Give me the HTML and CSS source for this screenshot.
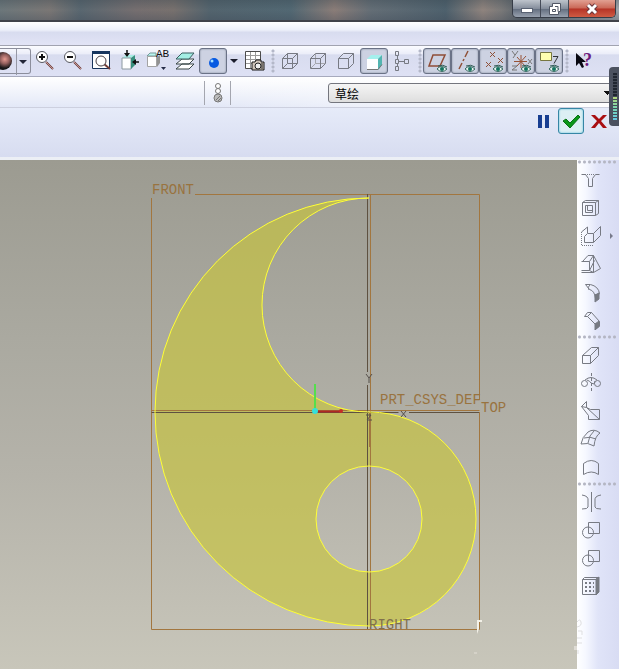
FILE: index.html
```html
<!DOCTYPE html>
<html lang="zh-CN">
<head>
  <meta charset="UTF-8" />
  <meta name="viewport" content="width=device-width, initial-scale=1.0"/>
  <title>草绘</title>
  <link rel="stylesheet" href="styles.css">
</head>
<body>
  <header class="titlebar">
    <div class="window-buttons">
      <button class="win-btn minimize" aria-label="Minimize"><svg width="14" height="12"><rect x="1.500" y="5.500" width="11" height="4" fill="#fff" stroke="#596273"/></svg></button>
      <button class="win-btn restore" aria-label="Restore"><svg width="14" height="14"><path d="M4.500 1.500h8v8h-2v3h-9v-8h3z" fill="#fff" stroke="#515765"/><path d="M4.500 7.500h3v2h-3zM7 4.500h3v5" fill="none" stroke="#515765"/></svg></button>
      <button class="win-btn close" aria-label="Close"><svg width="14" height="14"><path d="M3 3l8 8M11 3l-8 8" stroke="#68353a" stroke-width="5"/><path d="M3 3l8 8M11 3l-8 8" stroke="#fff" stroke-width="3"/></svg></button>
    </div>
  </header>

  <nav class="menubar"></nav>

  <div class="toolbar">
    <button class="split" aria-label="Appearance">
      <svg width="30" height="26"><defs><radialGradient id="ball" cx="60%" cy="40%"><stop offset="0" stop-color="#e59a92"/><stop offset=".5" stop-color="#94605e"/><stop offset="1" stop-color="#171719"/></radialGradient></defs><circle cx="3" cy="12" r="9" fill="url(#ball)"/><path d="M16.500 0v26" stroke="#9698a5"/><path d="M19 11h8l-4 4z" fill="#222638"/></svg>
    </button>
    <button class="tool" aria-label="Zoom in"><svg viewBox="0 0 24 24"><path d="M13 13l7 7" stroke="#6b3937" stroke-width="2"/><path d="M13 13l7 7" stroke="#c39690"/><circle cx="9" cy="8" r="5.500" fill="#fff" stroke="#55575f"/><path d="M6 8h6M9 5v6" stroke="#111" stroke-width="2"/></svg></button>
    <button class="tool" aria-label="Zoom out"><svg viewBox="0 0 24 24"><path d="M13 13l7 7" stroke="#6b3937" stroke-width="2"/><path d="M13 13l7 7" stroke="#c39690"/><circle cx="9" cy="8" r="5.500" fill="#fff" stroke="#55575f"/><path d="M6 8h6" stroke="#111" stroke-width="2"/></svg></button>
    <button class="tool" aria-label="Refit"><svg viewBox="0 0 24 24"><path d="M3.500 2.500h17v17h-17z" fill="#fff" stroke="#19335a"/><path d="M3 3.500h18" stroke="#17365f" stroke-width="3"/><path d="M15 15l6 5" stroke="#713d37" stroke-width="2"/><circle cx="12" cy="12" r="5" fill="#fff" stroke="#494046"/></svg></button>
    <button class="tool" aria-label="Reorient"><svg viewBox="0 0 24 24"><path d="M5 9l4-3h9l-4 3z" fill="#a8eee5"/><path d="M5 9h9v11H5z" fill="#fff" stroke="#8c99a0"/><path d="M14 9l4-3v10l-4 4z" fill="#378f7d"/><path d="M10 1v6M22 13h-6" stroke="#111" stroke-width="1.500"/><path d="M7 4h6l-3 4zM19 10v6l-4-3z" fill="#111"/></svg></button>
    <button class="tool" aria-label="Saved views"><svg viewBox="0 0 24 24"><path d="M2 7l3-3h6v3z" fill="#baf5ef" stroke="#759b9b"/><path d="M2.500 7.500h9v10h-9z" fill="#fff" stroke="#a3a3a3"/><path d="M12 8l3-2v8l-3 4z" fill="#929292"/><text x="11" y="8" class="view-label">AB</text><path d="M16 18h5l-2.500 3z" fill="#252c47"/></svg></button>
    <button class="tool" aria-label="Layers"><svg viewBox="0 0 24 24"><path d="M3 20l6-5h12l-5 5zM3 15l6-5h12l-5 5z" fill="#fff" stroke="#394647"/><path d="M3 10l6-6h12l-5 6z" fill="#a3eee4" stroke="#3b5f60"/></svg></button>
    <button class="tool pressed" aria-label="Spin center"><svg viewBox="0 0 24 24"><circle cx="13" cy="14" r="5" fill="#075ae1"/><circle cx="11" cy="12" r="1.500" fill="#a2dfff"/></svg></button>
    <button class="tool drop" aria-label="More spin options"><svg viewBox="0 0 12 24"><path d="M2 10h8l-4 4z" fill="#1b1d2c"/></svg></button>
    <button class="tool" aria-label="View manager"><svg viewBox="0 0 24 24"><path d="M2.500 2.500h15v17h-15z" fill="#fff" stroke="#4c4c4c"/><path d="M3 6.500h14M3 10.500h14M3 14.500h14M7.500 3v16M12.500 3v16" stroke="#999"/><path d="M9 13h3l1-2h5v2h3v8H9z" fill="#cfc5ba" stroke="#171717"/><circle cx="15" cy="17" r="3" fill="#eee" stroke="#222"/><path d="M19 14v6" stroke="#222"/></svg></button>
    <span class="grip"></span>
    <button class="tool" aria-label="Wireframe"><svg class="line" viewBox="0 0 24 24"><path d="M4.500 9.500h10v10h-10zM9.500 4.500h10v10h-10zM4.500 9.500l5-5M14.500 9.500l5-5M4.500 19.500l5-5M14.500 19.500l5-5"/></svg></button>
    <button class="tool" aria-label="Hidden line"><svg class="line" viewBox="0 0 24 24"><path class="faint" d="M9.500 5v9.500h9.500M5 19l4.500-4.500"/><path d="M4.500 9.500h10v10h-10zM4.500 9.500l5-5h10v10l-5 5M14.500 9.500l5-5"/></svg></button>
    <button class="tool" aria-label="No hidden"><svg class="line" viewBox="0 0 24 24"><path d="M4.500 9.500h10v10h-10zM4.500 9.500l5-5h10v10l-5 5M14.500 9.500l5-5"/></svg></button>
    <button class="tool pressed" aria-label="Shaded"><svg viewBox="0 0 24 24"><path d="M5 10l4-4h11l-4 4z" fill="#a5f0ed"/><path d="M5 10h11v11H5z" fill="#fff"/><path d="M16 10l4-4v10l-4 5z" fill="#53b5b1"/><path d="M5 20.500h11l4-5" stroke="#777" fill="none"/></svg></button>
    <button class="tool" aria-label="Model tree"><svg class="line" viewBox="0 0 24 24"><path d="M5.500 2.500h3v4h-3zM5.500 10.500h3v4h-3zM5.500 17.500h3v4h-3zM14.500 10.500h4v4h-4zM7.500 6.500v4M7.500 14.500v3M8.500 12.500h6"/></svg></button>
    <span class="grip"></span>
    <button class="tool pressed" aria-label="Datum planes"><svg viewBox="0 0 24 24"><path d="M8 6h12l-5 11H4z" fill="none" stroke="#8f4d37" stroke-width="1.500"/><use href="#eye"/></svg></button>
    <button class="tool pressed" aria-label="Datum axes"><svg viewBox="0 0 24 24"><path d="M15 2l-3 6M11 10l-1 2M9 14l-3 6" stroke="#8f5138" stroke-width="1.500"/><use href="#eye"/></svg></button>
    <button class="tool pressed" aria-label="Datum points"><svg viewBox="0 0 24 24"><path d="M9 3l5 5m0-5L9 8M5 13l5 5m0-5l-5 5M17 9l5 5m0-5l-5 5" stroke="#8f5138"/><use href="#eye"/></svg></button>
    <button class="tool pressed" aria-label="Coordinate systems"><svg viewBox="0 0 24 24"><path d="M12 6v13M5 12.500h13M8 17l9-10M8 8l8 9" stroke="#985337"/><path d="M3 2l3 4m3-4L4 9M19 10l4 5m0-5l-4 5M3 17h5l-5 4h5" fill="none" stroke="#777"/><use href="#eye"/></svg></button>
    <button class="tool pressed" aria-label="Annotations"><svg viewBox="0 0 24 24"><path d="M3.500 3.500h11v8h-11z" fill="#ffffb0" stroke="#777741"/><path d="M16 7.500h5l-4 7" stroke="#30343a" fill="none"/><use href="#eye"/></svg></button>
    <span class="grip"></span>
    <button class="tool" aria-label="Context help"><svg viewBox="0 0 24 24"><path d="M4 4v13l3-3 3 5 2-1-2-5h4z" fill="#080811"/><text x="11" y="17" class="question">?</text></svg></button>
  </div>

  <div class="optionbar">
    <div class="signal"><svg width="14" height="22"><g fill="#fff" stroke="#777"><circle cx="7" cy="4" r="2.500"/><circle cx="7" cy="9" r="2.500"/><circle cx="7" cy="16" r="4" fill="#bbb"/></g><path d="M5 18l4-4M7 19l3-3" stroke="#777"/></svg></div>
    <select class="feature-select" aria-label="Feature"><option>草绘</option></select>
  </div>

  <div class="dashboard">
    <button class="action" aria-label="Pause"><svg width="24" height="24"><path d="M7 6h4v13H7zM14 6h4v13h-4z" fill="#183e91"/></svg></button>
    <button class="action confirm" aria-label="Accept"><svg width="24" height="24"><path d="M4 12l3-2 4 4 8-8 2 2-10 11z" fill="#0a9818" stroke="#087016"/></svg></button>
    <button class="action" aria-label="Cancel"><svg width="24" height="24"><path d="M4 6h4l4 4 4-4h4l-6 6 6 7h-4l-4-5-4 5H4l6-7z" fill="#a90e12"/></svg></button>
  </div>

  <main class="workspace">
    <section class="viewport">
      <svg class="sketch" viewBox="0 160 577 509" role="img" aria-label="FRONT">
        <!-- sketched section -->
        <path class="section" fill-rule="evenodd" d="M369 198A214 214 0 0 0 369 626A107 107 0 0 0 369 412A107 107 0 0 1 369 198ZM422 519A53 53 0 1 1 316 519A53 53 0 1 1 422 519Z"/>
        <!-- datum planes -->
        <path class="datum" d="M151.500 198v431.500h328V412M479.500 400V194.500H195M151.500 410.500h328M370.500 194v435"/>
        <path class="axis" d="M367.500 194v178M367.500 385v244M151.500 412.500h247M409 412.500h70"/>
        <path class="datum" d="M369.500 412v35"/>
        <path class="outline" d="M369 198A214 214 0 0 0 369 626A107 107 0 0 0 369 412A107 107 0 0 1 369 198ZM422 519A53 53 0 1 1 316 519A53 53 0 1 1 422 519Z"/>
        <path d="M315 409v-25" stroke="#55df4c" stroke-width="2"/>
        <path d="M316 411.500h25" stroke="#ae2923" stroke-width="2"/>
        <circle cx="341" cy="411" r="2" fill="#c72c28"/>
        <circle cx="315" cy="411" r="3" fill="#36dfda"/>
        <path d="M366 374l3 4 3-4M369 378v5M401 411l5 6M406 411l-5 6M366 415h5l-4 5h5" fill="none" stroke="#55504b"/>
        <text class="datum-label" x="152" y="194">FRONT</text>
        <text class="datum-label" x="380" y="404">PRT_CSYS_DEF</text>
        <text class="datum-label" x="481" y="412">TOP</text>
        <text class="datum-label dark" x="369" y="629">RIGHT</text>
        <path d="M477 620h5v2h-3v7l-2 5z" fill="#f3f1e8"/>
        <path d="M474 653h3" stroke="#d5d2c8" stroke-width="2"/>
        <path d="M574 648h3" stroke="#dedbd4" stroke-width="4"/>
      </svg>
    </section>

    <aside class="feature-tools">
      <span class="grip across"></span>
      <button class="feature" aria-label="Hole"><svg class="line" viewBox="0 0 24 24"><path d="M3.500 6.500h4l3 4v8h4v-8l3-4h4"/><path stroke-dasharray="1 1" d="M7 6.500h10"/></svg></button>
      <button class="feature" aria-label="Shell"><svg class="line" viewBox="0 0 24 24"><path d="M4.500 6.500l3-2h13v13l-3 2h-13zM4.500 6.500h13v13M17.500 6.500l3-2M7.500 9.500h7v7h-7zM9.500 9.500v5h5"/></svg></button>
      <button class="feature flyout" aria-label="Rib"><svg class="line" viewBox="0 0 24 24"><path d="M15.500 9.500l7-7v9l-7 7h-9v-6l3-3h6v9M3.500 8l6-5v6"/><path stroke-dasharray="1 1" d="M3.500 8v13.500h12"/></svg></button>
      <button class="feature" aria-label="Draft"><svg class="line" viewBox="0 0 24 24"><path d="M3.500 9.500h8v9h-8M3.500 20.500h12M11.500 9.500l4-6M5 9l5-5.500h5.500l7 13-7 4-4-2M11.500 18.500l5-10M15.500 3.500v17"/></svg></button>
      <button class="feature" aria-label="Round"><svg class="line" viewBox="0 0 24 24"><path d="M7.500 4.500h5q8 2 9 9l-4 5q-1-8-6-9zM12 5q-3 2-1 5M21 14l-4 1"/><path class="solid" d="M17 15l4-2v6l-4 3z"/></svg></button>
      <button class="feature" aria-label="Chamfer"><svg class="line" viewBox="0 0 24 24"><path d="M6.500 8.500l3-4h4l8 9v5l-4 3v-5l-8-8zM13.500 4.500l-4 4"/><path class="solid" d="M17 16l4-3v5l-4 4z"/></svg></button>
      <span class="grip across"></span>
      <button class="feature" aria-label="Extrude"><svg class="line" viewBox="0 0 24 24"><path d="M4.500 12.500h8v8h-8zM4.500 12.500l9-8h7v8l-8 8M12.500 12.500l8-8"/></svg></button>
      <button class="feature" aria-label="Revolve"><svg class="line" viewBox="0 0 24 24"><circle cx="6.500" cy="12.500" r="3"/><circle cx="19.500" cy="12.500" r="3"/><path d="M7 9q6-5 12 0M9 9q3 1 4 3l3 1 1-3"/><path stroke-dasharray="3 2" d="M13.500 2v20"/></svg></button>
      <button class="feature" aria-label="Sweep"><svg class="line" viewBox="0 0 24 24"><path d="M3.500 7.500l5-5v6l4 2h9v10h-11v-4zM3.500 7.500l5 1 13 12"/></svg></button>
      <button class="feature" aria-label="Boundary blend"><svg class="line" viewBox="0 0 24 24"><path d="M10 5q6-4 12 1-5 3-6 13-6-4-13-2 1-7 7-12zM6 11q6-2 12 1M16 4q-5 4-6 12"/></svg></button>
      <button class="feature" aria-label="Style"><svg class="line" viewBox="0 0 24 24"><path d="M5.500 19.500v-11q8-6 15 0v11q-7-5-15 0z"/></svg></button>
      <span class="grip across"></span>
      <button class="feature" aria-label="Mirror"><svg class="line" viewBox="0 0 24 24"><path d="M13.500 2v20M4 5q7 1 6 6v6q0 2-6 2M23 5q-7 1-6 6v6q0 2 6 2"/></svg></button>
      <button class="feature" aria-label="Merge"><svg class="line" viewBox="0 0 24 24"><path d="M10.500 4.500h11v11h-11z"/><circle cx="10" cy="14.500" r="5.500"/></svg></button>
      <button class="feature" aria-label="Trim"><svg class="line" viewBox="0 0 24 24"><path d="M10.500 4.500h11v11h-11z"/><circle cx="10" cy="14.500" r="5.500"/></svg></button>
      <button class="feature" aria-label="Pattern"><svg class="line" viewBox="0 0 24 24"><path d="M4.500 5.500h14v15h-14zM4.500 5.500l2-2h14v15l-2 2"/><path class="solid" d="M18 5l3-2v15l-3 3z"/><path stroke-dasharray="2 2" stroke-width="2" d="M7 9h9M7 13h9M7 17h9"/></svg></button>
      <svg class="mark" width="8" height="40"><path d="M0 5q3-4 4 0t-4 5M1 14h4v4M0 21h5M0 26h5M1 33v4" fill="none" stroke="#dfdfe1"/></svg>
    </aside>
  </main>

  <div class="meter"><span class="meter-bars"></span></div>

  <svg class="defs" width="0" height="0" aria-hidden="true">
    <g id="eye"><path d="M12 20q4-5 10 0-5 5-10 0" fill="#e9f5ef" stroke="#376961"/><circle cx="17" cy="20" r="2" fill="#14735f"/><path d="M13 17q5-2 9 1" fill="none" stroke="#315c55"/></g>
  </svg>
</body>
</html>
```
FILE: styles.css
```css
* { margin: 0; padding: 0; box-sizing: border-box; }

body {
  position: relative;
  display: flex;
  flex-direction: column;
  min-height: 100vh;
  overflow-x: hidden;
  background: #dfe2f5;
  font-family: "Liberation Sans", "Noto Sans CJK SC", sans-serif;
}

button {
  border: none;
  background: none;
}

svg { display: block; }

.titlebar {
  display: flex;
  justify-content: flex-end;
  height: 22px;
  padding-right: 3px;
  border-bottom: 2px solid #41434a;
  background:
    linear-gradient(to bottom, rgba(50, 65, 75, 0.3), transparent 50%, rgba(60, 70, 85, 0.3)),
    linear-gradient(to right, #6c777b, #7b7775 8%, #596770 13%, #766f70 22%, #78716e 28%, #53646e 34%, #526873 47%, #8b7d78 54%, #646e76 60%, #4e616d 72%, #90847e 78%, #7a7979 81%, #59636b 84%, #a1a7ad);
}

.window-buttons {
  display: flex;
  height: 18px;
  border: 1px solid #363c47;
  border-top: none;
  border-radius: 0 0 5px 5px;
  overflow: hidden;
}

.win-btn {
  display: flex;
  align-items: center;
  justify-content: center;
  width: 28px;
  border-right: 1px solid #454b58;
  background: linear-gradient(#bec4cc, #858e9c 50%, #626d7e 52%, #98a1af);
}

.win-btn.close {
  width: 46px;
  border-right: none;
  background: linear-gradient(#e1a092, #ca6756 48%, #b53326 52%, #cf5b43);
}

.menubar {
  height: 24px;
  border-bottom: 1px solid #a1a3b0;
  background: linear-gradient(#fff, #edf0fa 35%, #d8dcef 45%, #e2e4f6);
}

.toolbar {
  display: flex;
  align-items: center;
  height: 31px;
  border-bottom: 1px solid #a7aabd;
  background: linear-gradient(#fbfcff, #eceef9 25%, #d8dcef 30%, #dee1f4);
}

.split {
  width: 31px;
  height: 26px;
  border: 1px solid #8c8e9c;
  border-left: none;
  border-radius: 0 3px 3px 0;
}

.tool {
  display: flex;
  align-items: center;
  justify-content: center;
  width: 28px;
  height: 26px;
}

.tool svg,
.feature svg {
  flex: none;
  width: 24px;
  height: 24px;
}

.tool.drop {
  width: 14px;
}

.tool.drop svg {
  width: 12px;
}

.tool.pressed {
  border: 1px solid #6a7286;
  border-radius: 3px;
  background: #cdd2e2;
  box-shadow: inset 0 0 2px #7a8294;
}

.line {
  fill: none;
  stroke: #777a83;
}

.faint { stroke: #a4a6ad; }

.solid { fill: #777a82; }

.view-label {
  font: 11px "Liberation Mono", monospace;
  fill: #111;
}

.question {
  font: bold 18px "Liberation Serif", serif;
  fill: #6c197d;
}

.grip {
  width: 7px;
  height: 24px;
  background: radial-gradient(circle, #b4b8c9 1px, transparent 2px) center top / 4px 4px repeat-y;
}

.grip.across {
  width: 40px;
  height: 7px;
  background: radial-gradient(circle, #b4b6c3 1px, transparent 2px) left top / 5px 4px repeat-x;
}

.optionbar {
  display: flex;
  align-items: center;
  justify-content: space-between;
  height: 31px;
  padding: 2px 0 0 204px;
  border-bottom: 1px solid #cdd0df;
  background: linear-gradient(to right, transparent 35%, #fff), linear-gradient(#fff, #e3e8f7);
}

.signal {
  display: flex;
  align-items: center;
  justify-content: center;
  width: 27px;
  height: 24px;
  border: solid #a4a6af;
  border-width: 0 1px;
}

.feature-select {
  flex: 1;
  height: 20px;
  margin-left: 97px;
  padding-left: 6px;
  border: 1px solid #74767e;
  border-radius: 3px 0 0 3px;
  appearance: none;
  background:
    linear-gradient(to bottom right, #111 50%, transparent 50%) right 6px center / 4px 4px no-repeat,
    linear-gradient(to bottom left, #111 50%, transparent 50%) right 10px center / 4px 4px no-repeat,
    linear-gradient(#f5f5f5, #dedede);
  color: #000;
  font: 12px "Noto Sans CJK SC", sans-serif;
}

.dashboard {
  display: flex;
  align-items: flex-start;
  justify-content: flex-end;
  gap: 2px;
  height: 52px;
  padding-right: 7px;
  border-bottom: 3px solid #eceff5;
  background: linear-gradient(#e6ebf9, #d7dcf0);
}

.action {
  display: flex;
  align-items: center;
  justify-content: center;
  width: 26px;
  height: 26px;
}

.action.confirm {
  border: 1px solid #3686a5;
  border-radius: 3px;
  background: #dceff4;
  box-shadow: inset 0 0 2px #51b7d4;
}

.workspace {
  display: flex;
  flex: 1;
}

.viewport {
  flex: 1;
  background: linear-gradient(#9c9b91, #aaa9a0 35%, #b5b3aa 62%, #c8c6ba);
}

.sketch {
  width: 100%;
}

.datum {
  fill: none;
  stroke: #a2763f;
}

.axis {
  fill: none;
  stroke: #5e5141;
}

.section {
  fill: #c7c43c;
  fill-opacity: 0.65;
}

.outline {
  fill: none;
  stroke: #ffff36;
}

.datum-label {
  font: 14px "Liberation Mono", monospace;
  fill: #99733f;
}

.datum-label.dark { fill: #80704c; }

.feature-tools {
  display: flex;
  flex-direction: column;
  width: 42px;
  background: linear-gradient(to right, #fff, #f6f8ff 20%, #e0e4f8 50%, #d8dcf3);
}

.feature {
  display: flex;
  flex: none;
  align-items: center;
  width: 42px;
  height: 28px;
  padding: 0 0 2px 1px;
}

.flyout::after {
  content: '';
  margin-left: 8px;
  border: 3px solid transparent;
  border-left-color: #777a8a;
}

.mark {
  margin-top: 16px;
}

/* floats above the window edge */
.meter {
  position: absolute;
  top: 67px;
  right: 0;
  width: 10px;
  height: 59px;
  padding: 6px 2px 6px 4px;
  border-radius: 4px 0 0 4px;
  background: #4b515f;
}

.meter-bars {
  display: block;
  height: 100%;
  background:
    repeating-linear-gradient(transparent 0 2px, #454b57 2px 3px),
    linear-gradient(#202631 50%, #b7d878 50%, #78d5b1 75%, #65c7e4);
}

.defs { position: absolute; }
```
